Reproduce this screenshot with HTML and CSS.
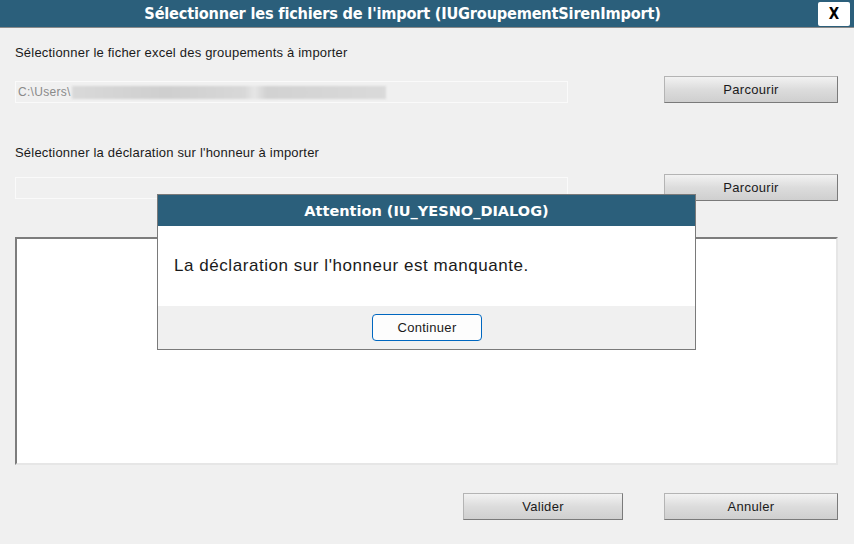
FILE: index.html
```html
<!DOCTYPE html>
<html lang="fr">
<head>
<meta charset="UTF-8">
<title>Sélectionner les fichiers de l'import</title>
<link rel="stylesheet" href="styles.css">
</head>
<body>
	<div class="window">
		<div class="title-bar">
			<div class="title">Sélectionner les fichiers de l'import (IUGroupementSirenImport)</div>
			<div class="close-btn">X</div>
		</div>

		<div class="content">
			<div class="label">Sélectionner le ficher excel des groupements à importer</div>
			<div class="file-row">
				<div class="path-field"><span class="path-text">C:\Users\</span><span class="blurred"></span></div>
				<button class="btn">Parcourir</button>
			</div>

			<div class="label label-second">Sélectionner la déclaration sur l'honneur à importer</div>
			<div class="file-row file-row-second">
				<div class="path-field"></div>
				<button class="btn">Parcourir</button>
			</div>

			<div class="list-box"></div>

			<div class="footer">
				<button class="btn btn-footer">Valider</button>
				<button class="btn btn-footer">Annuler</button>
			</div>
		</div>

		<!-- boite de dialogue par-dessus -->
		<div class="dialog">
			<div class="dialog-header">Attention (IU_YESNO_DIALOG)</div>
			<div class="dialog-body">La déclaration sur l'honneur est manquante.</div>
			<div class="dialog-footer">
				<button class="btn-continue">Continuer</button>
			</div>
		</div>
	</div>
</body>
</html>
```

FILE: styles.css
```css
body {
	margin: 0;
	background-color: #f0f0f0;
	font-family: "Liberation Sans", Arial, sans-serif;
}
.window {
	position: relative;
	width: 854px;
	height: 544px;
	overflow: hidden;
}
.title-bar {
	height: 28px;
	background-color: #2b5f7b;
	border-bottom: 1px solid #8a8a8a;
	display: flex;
	align-items: center;
	padding: 0 4px 0 0;
	box-sizing: border-box;
}
.title {
	flex: 1;
	text-align: center;
	color: #fff;
	font-family: "DejaVu Sans Condensed", "DejaVu Sans", sans-serif;
	font-weight: bold;
	font-size: 16.2px;
	letter-spacing: -0.2px;
	padding-right: 13px;
}
.close-btn {
	width: 32px;
	height: 24px;
	margin-top: 1px;
	background: #fff;
	border-radius: 2px;
	color: #000;
	font-family: "DejaVu Sans Condensed", sans-serif;
	font-weight: bold;
	font-size: 15px;
	display: flex;
	align-items: center;
	justify-content: center;
}
.content {
	padding: 0 16px 0 15px;
}
.label {
	font-size: 13px;
	letter-spacing: 0.2px;
	color: #1a1a1a;
	margin-top: 17px;
	height: 15px;
}
.label-second {
	margin-top: 42px;
}
.file-row {
	display: flex;
	justify-content: space-between;
	align-items: flex-end;
	margin-top: 16px;
	height: 27px;
}
.file-row-second {
	margin-top: 14px;
}
.path-field {
	width: 553px;
	height: 22px;
	border: 1px solid #fafafa;
	box-sizing: border-box;
	display: flex;
	align-items: center;
	padding-left: 2px;
	font-size: 12px;
	color: #8a8a8a;
}
.file-row-second .path-field {
	margin-bottom: 2px;
}
.path-text {
	letter-spacing: 0.3px;
}
.blurred {
	display: inline-block;
	width: 314px;
	height: 13px;
	margin-left: 1px;
	background: linear-gradient(90deg, #d9d9d9, #cfcfcf 30%, #d8d8d8 55%, #e6e6e6 58%, #d2d2d2 62%, #dadada);
	filter: blur(1px);
}
.btn {
	width: 174px;
	height: 27px;
	padding: 0;
	font-family: "Liberation Sans", Arial, sans-serif;
	font-size: 13px;
	letter-spacing: 0.3px;
	color: #1a1a1a;
	background: linear-gradient(#f2f2f2, #dcdcdc 50%, #cfcfcf);
	border: 1px solid #b4b4b4;
	border-right-color: #7a7a7a;
	border-bottom-color: #7a7a7a;
	border-radius: 0;
}
.list-box {
	margin-top: 36px;
	height: 228px;
	background: #fff;
	border-top: 2px solid #7d7d7d;
	border-left: 2px solid #7d7d7d;
	border-right: 2px solid #e6e6e6;
	border-bottom: 2px solid #e6e6e6;
	box-sizing: border-box;
}
.footer {
	display: flex;
	justify-content: flex-end;
	gap: 41px;
	margin-top: 28px;
}
.btn-footer {
	width: 160px;
}
.btn-footer:last-child {
	width: 174px;
}
.dialog {
	position: absolute;
	left: 157px;
	top: 194px;
	width: 539px;
	border: 1px solid #7a7a7a;
	background: #f0f0f0;
	box-sizing: border-box;
}
.dialog-header {
	height: 31px;
	background: #2b5f7b;
	color: #fff;
	font-family: "DejaVu Sans", sans-serif;
	font-weight: bold;
	font-size: 14.5px;
	display: flex;
	align-items: center;
	justify-content: center;
}
.dialog-body {
	height: 80px;
	background: #fff;
	display: flex;
	align-items: center;
	padding-left: 16px;
	font-size: 17px;
	letter-spacing: 0.55px;
	color: #1a1a1a;
}
.dialog-footer {
	height: 43px;
	display: flex;
	justify-content: center;
	align-items: center;
}
.btn-continue {
	width: 110px;
	height: 27px;
	margin-left: 1px;
	background: #fdfdfd;
	border: 1px solid #0067c0;
	border-radius: 4px;
	font-family: "Liberation Sans", Arial, sans-serif;
	font-size: 13px;
	letter-spacing: 0.3px;
	color: #1a1a1a;
}
```
